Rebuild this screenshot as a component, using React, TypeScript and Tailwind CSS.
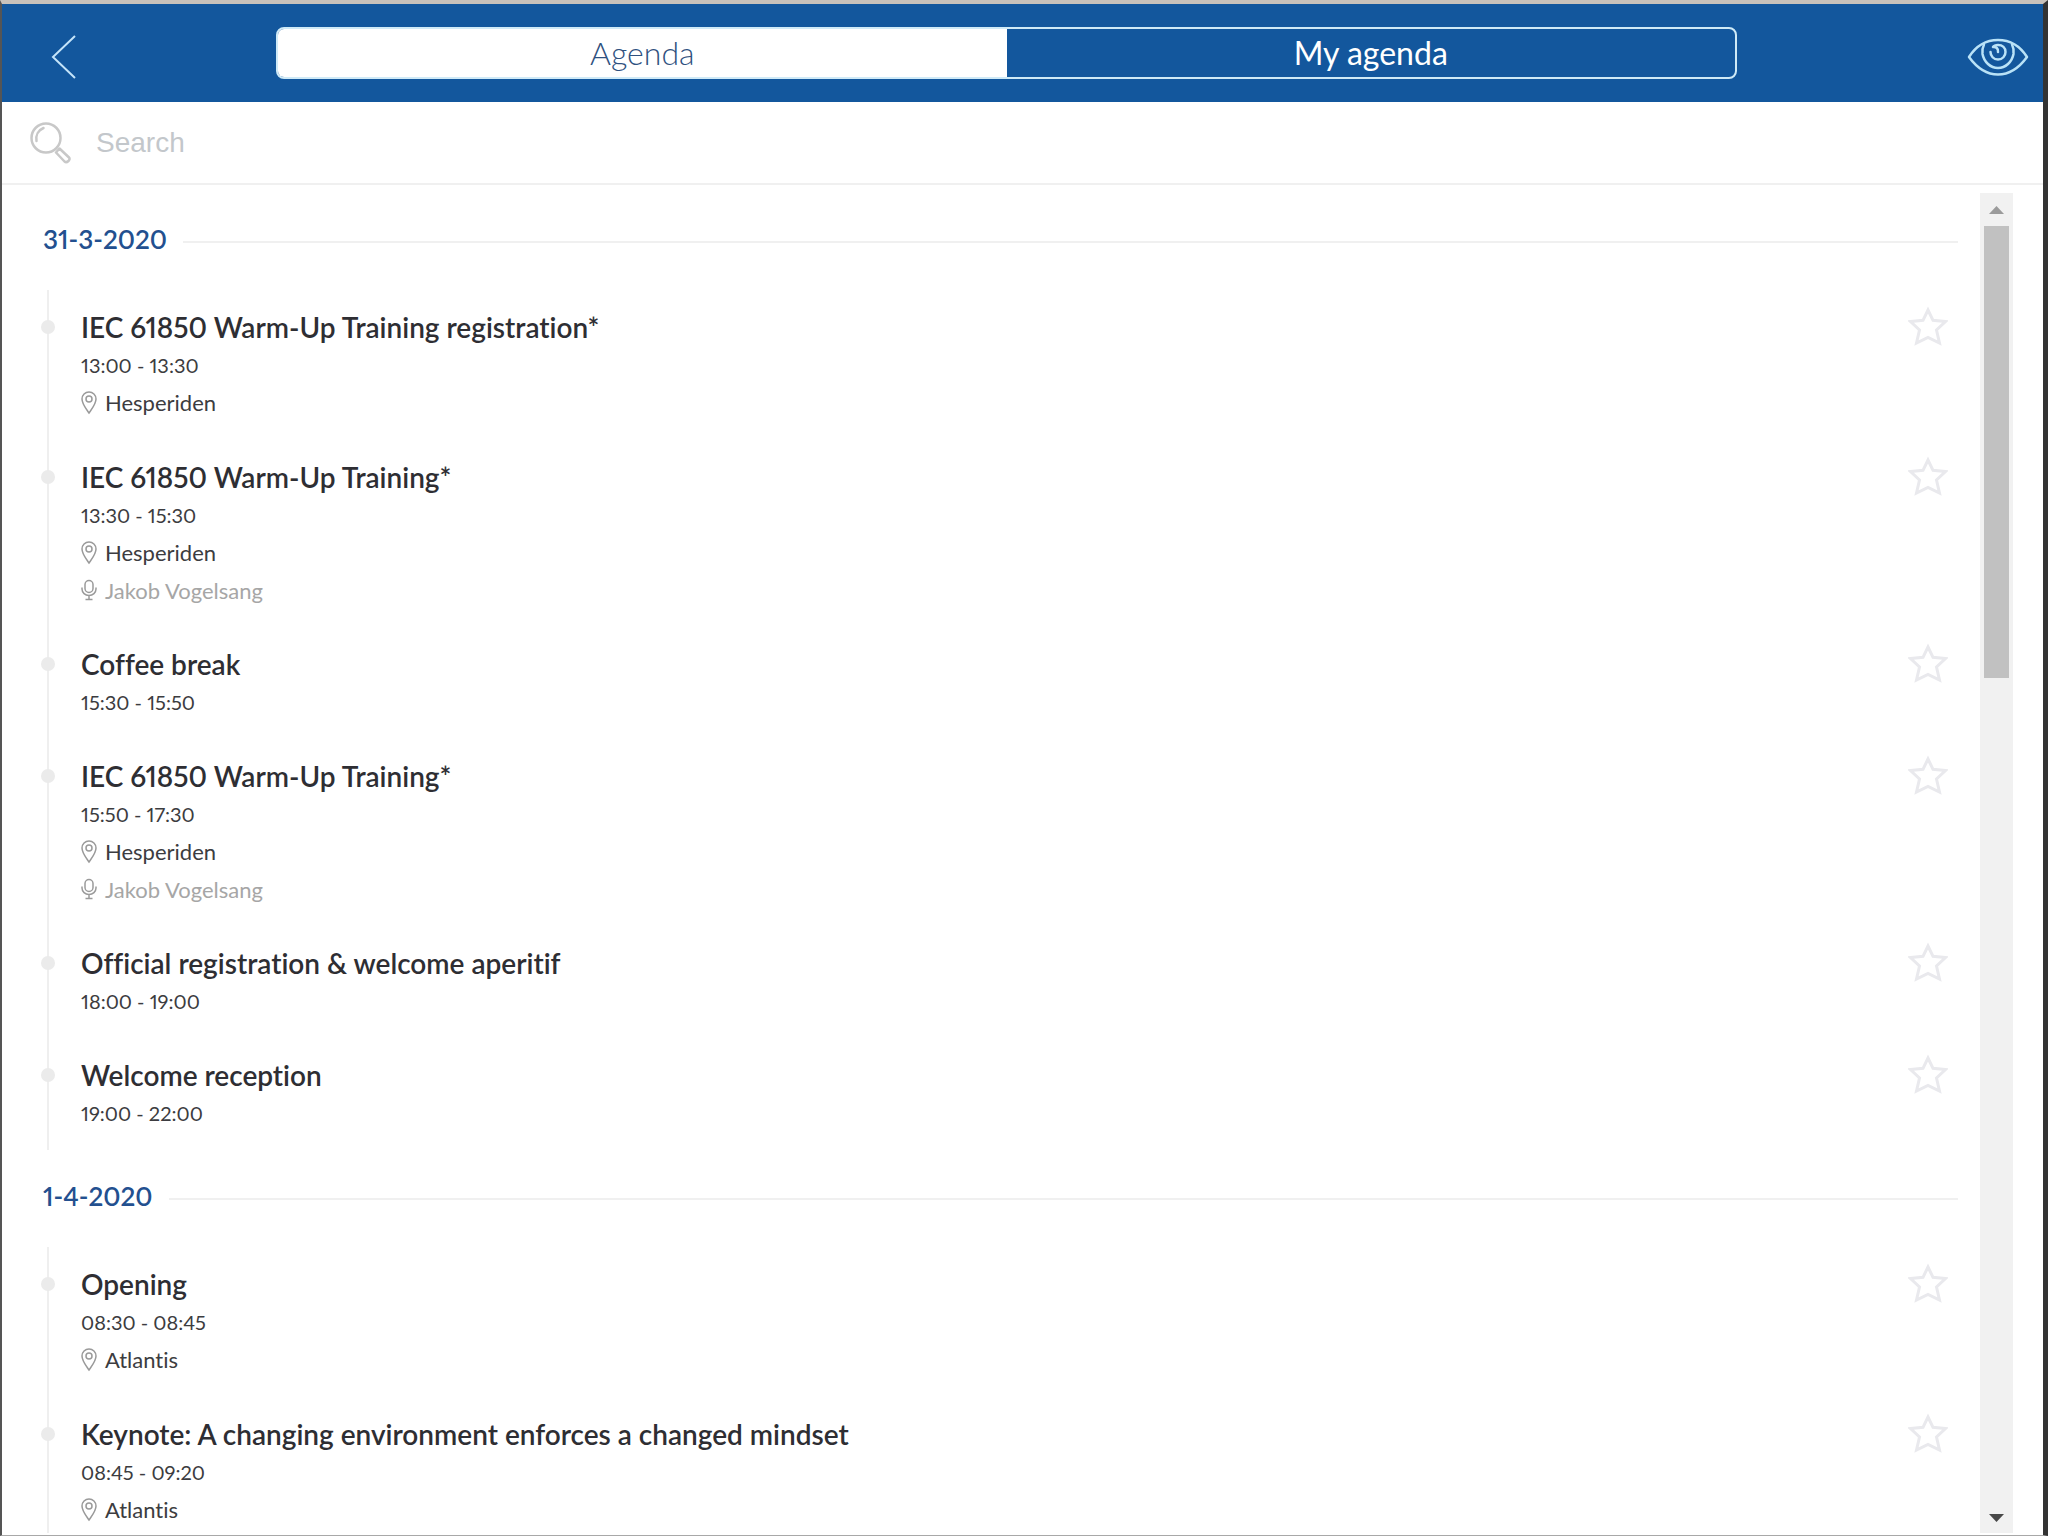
type Session = {
  title: string;
  time: string;
  location?: string;
  speaker?: string;
};

type Day = {
  date: string;
  sessions: Session[];
};

const days: Day[] = [
  {
    date: "31-3-2020",
    sessions: [
      {
        title: "IEC 61850 Warm-Up Training registration*",
        time: "13:00 - 13:30",
        location: "Hesperiden",
      },
      {
        title: "IEC 61850 Warm-Up Training*",
        time: "13:30 - 15:30",
        location: "Hesperiden",
        speaker: "Jakob Vogelsang",
      },
      { title: "Coffee break", time: "15:30 - 15:50" },
      {
        title: "IEC 61850 Warm-Up Training*",
        time: "15:50 - 17:30",
        location: "Hesperiden",
        speaker: "Jakob Vogelsang",
      },
      {
        title: "Official registration & welcome aperitif",
        time: "18:00 - 19:00",
      },
      { title: "Welcome reception", time: "19:00 - 22:00" },
    ],
  },
  {
    date: "1-4-2020",
    sessions: [
      { title: "Opening", time: "08:30 - 08:45", location: "Atlantis" },
      {
        title: "Keynote: A changing environment enforces a changed mindset",
        time: "08:45 - 09:20",
        location: "Atlantis",
      },
    ],
  },
];

function ChevronIcon() {
  return (
    <svg viewBox="0 0 26 46" className="h-[46px] w-[26px]" fill="none" stroke="#c4e4fa" strokeWidth={2}>
      <path d="M24 2L2 23l22 21" />
    </svg>
  );
}

function EyeIcon() {
  return (
    <svg
      viewBox="0 0 62 40"
      className="h-10 w-[62px]"
      fill="none"
      stroke="#b9e2f7"
      strokeWidth={2.5}
      strokeLinecap="round"
      strokeLinejoin="round"
    >
      <path d="M2 20C9 9 19 3 31 3s22 6 29 17C52 31 43 37.500 31 37.500S10 31 2 20z" />
      <path d="M17 7.500c-1.500 3-2 6-1.500 9.500 1.500 8 8 14 15.500 14s14-6 15.500-14c.5-3.500 0-6.500-1.500-9.500" />
      <path d="M23.500 15c0 4 3 7.500 7.500 7.500s7.500-3.500 7.500-7.500S35.500 8 31 8c-2 0-4 .5-5 2 3-.5 5.500 1.500 5 5" />
    </svg>
  );
}

function SearchIcon() {
  return (
    <svg viewBox="0 0 42 42" className="h-[42px] w-[42px] shrink-0" fill="none" stroke="#c8c8c8" strokeWidth={2.5}>
      <circle cx="16" cy="16" r="14.500" />
      <path d="M6.500 19c-1-6 2-11 7-13" strokeLinecap="round" />
      <path d="M26 30.500l3.500-4 9.500 9c2 2-2 6-4.500 4z" strokeLinejoin="round" />
    </svg>
  );
}

function StarIcon() {
  return (
    <svg viewBox="0 0 40 40" className="h-10 w-10 shrink-0" fill="none" stroke="#e9e9ed" strokeWidth={3}>
      <path d="M20 4l5 10.300 12.500 1.200-9 8.500L31.500 37 20 31.500 8.500 37l3-13-9-8.500L15 14.300z" />
    </svg>
  );
}

function PinIcon() {
  return (
    <svg viewBox="0 0 16 24" className="h-6 w-4 shrink-0" fill="none" stroke="#9a9a9a" strokeWidth={1.5}>
      <path d="M8 22C5 17.500 1 13 1 8a7 7 0 0 1 14 0c0 5-4 9.500-7 14z" />
      <circle cx="8" cy="8" r="3" />
    </svg>
  );
}

function MicIcon() {
  return (
    <svg viewBox="0 0 16 24" className="h-6 w-4 shrink-0" fill="none" stroke="#9a9a9a" strokeWidth={1.5}>
      <rect x="4" y="1.500" width="8" height="12" rx="4" />
      <path d="M1 8.500v1.500a7 6.500 0 0 0 14 0V8.500M8 16.500V20M4.500 20.500h7" />
    </svg>
  );
}

function SessionRow({ session }: { session: Session }) {
  return (
    <li className="flex items-start pt-[19px] pb-[18px]">
      <span className="mt-[11px] -ml-2 h-3.5 w-3.5 shrink-0 rounded-full bg-[#ebebeb]" />
      <div className="ml-[26px] min-w-0 flex-1 text-[22px] text-[#3c3c40]">
        <h3 className="text-[28px] leading-[37px] font-semibold text-[#2e2e33]">{session.title}</h3>
        <p className="text-[20px] leading-[38px]">{session.time}</p>
        {session.location && (
          <p className="flex items-center gap-2 leading-[38px]">
            <PinIcon />
            {session.location}
          </p>
        )}
        {session.speaker && (
          <p className="flex items-center gap-2 leading-[37px] text-[#a6a6a6]">
            <MicIcon />
            {session.speaker}
          </p>
        )}
      </div>
      <button
        type="button"
        aria-label={`Add ${session.title} to my agenda`}
        className="mr-2.5 flex h-[34px] items-center"
      >
        <StarIcon />
      </button>
    </li>
  );
}

function DaySection({ day }: { day: Day }) {
  return (
    <section>
      <div className="flex h-[97px] items-center gap-4">
        <h2 className="-mt-1 text-[26px] font-semibold text-[#23508f]">{day.date}</h2>
        <div className="h-0.5 flex-1 bg-[#f0f0f0]" />
      </div>
      <ul className="ml-1 border-l-2 border-[#efefef]">
        {day.sessions.map((session) => (
          <SessionRow key={session.time} session={session} />
        ))}
      </ul>
    </section>
  );
}

function Scrollbar() {
  return (
    <div className="mr-[30px] flex w-[33px] shrink-0 flex-col items-center bg-[#f1f1f1]" aria-hidden="true">
      <svg viewBox="0 0 33 33" className="h-[33px] w-full shrink-0" fill="#9b9b9b">
        <path d="M9 21l7.500-8 7.500 8z" />
      </svg>
      <div className="min-h-0 w-full flex-1 px-1">
        <div className="h-[35.500%] bg-[#c1c1c1]" />
      </div>
      <svg viewBox="0 0 33 33" className="h-[33px] w-full shrink-0" fill="#484848">
        <path d="M9 14h15l-7.500 8z" />
      </svg>
    </div>
  );
}

export default function App() {
  return (
    <div className="flex h-screen flex-col overflow-hidden border-t-4 border-r-[5px] border-b border-l-2 border-t-[#c9c2bb] border-r-[#333333] border-b-[#a8a8a8] border-l-[#555555] bg-white font-['Lato',sans-serif] proportional-nums [font-variant-ligatures:no-common-ligatures]">
      <header className="flex h-[98px] shrink-0 items-start bg-[#13579d]">
        <div className="w-[274px] shrink-0 pt-[30px] pl-[49px]">
          <button type="button" aria-label="Back" className="block">
            <ChevronIcon />
          </button>
        </div>
        <div className="mt-[23px] flex h-[52px] flex-1 overflow-hidden rounded-lg border-2 border-[#cfeaf7] text-[32px]">
          <button type="button" aria-pressed="true" className="flex-1 bg-white leading-[48px] font-light text-[#2f5180]">
            Agenda
          </button>
          <button type="button" aria-pressed="false" className="flex-1 leading-[48px] text-white">
            My agenda
          </button>
        </div>
        <div className="flex w-[306px] shrink-0 justify-end pt-[33px] pr-[14px]">
          <button type="button" aria-label="Preview">
            <EyeIcon />
          </button>
        </div>
      </header>

      <label className="flex h-[83px] shrink-0 items-center gap-6 border-b-2 border-[#f0f0f0] pl-7">
        <SearchIcon />
        <input
          type="text"
          aria-label="Search"
          placeholder="Search"
          className="min-w-0 flex-1 font-['Liberation_Sans',Arial,sans-serif] text-[28px] text-[#555555] outline-none placeholder:text-[#c3c7cb]"
        />
      </label>

      <main className="mt-2 mb-0.5 flex min-h-0 flex-1">
        <div className="min-w-0 flex-1 overflow-hidden pr-[22px] pl-[41px]">
          {days.map((day) => (
            <DaySection key={day.date} day={day} />
          ))}
        </div>
        <Scrollbar />
      </main>
    </div>
  );
}
